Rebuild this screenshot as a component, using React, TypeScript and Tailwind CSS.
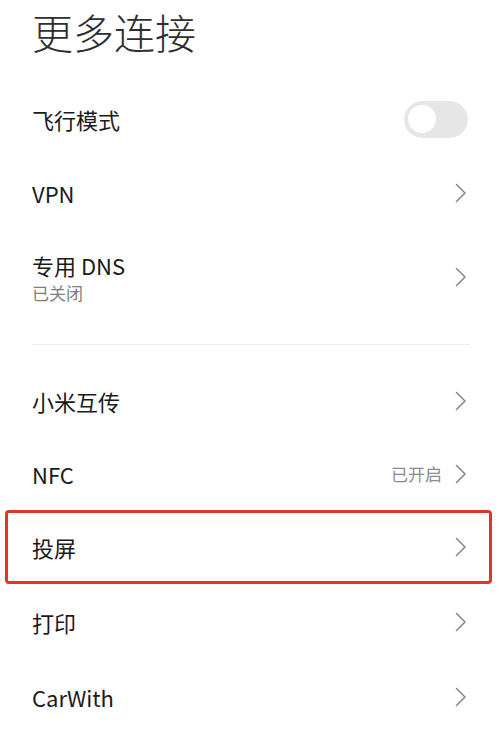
import type { ReactNode } from "react";

function Chevron() {
  return (
    <svg width="12" height="20" viewBox="0 0 12 20" aria-hidden="true" className="shrink-0">
      <polyline points="1.5,1.5 10,10 1.5,18.5" fill="none" stroke="#8a8a8a" strokeWidth="1.6" strokeLinecap="round" strokeLinejoin="round" />
    </svg>
  );
}

function Row({ title, sub, right, h }: { title: string; sub?: string; right?: ReactNode; h: string }) {
  return (
    <div className={`flex items-center justify-between pl-8 pr-[33px] ${h}`}>
      <div className="flex flex-col">
        <span className="text-[22px] leading-[32px] text-[#1a1a1a]">{title}</span>
        {sub ? <span className="text-[17px] leading-[24px] text-[#808080]">{sub}</span> : null}
      </div>
      {right ?? <Chevron />}
    </div>
  );
}

export default function App() {
  return (
    <div className="w-[500px] h-[741px] overflow-hidden bg-white" style={{ fontFamily: '"Noto Sans CJK SC", "Noto Sans", sans-serif' }}>
      <div className="h-[82px] pl-8 pt-[4px]">
        <h1 className="text-[41px] leading-[54px] font-light text-[#2e2e2e]">更多连接</h1>
      </div>

      <Row
        title="飞行模式"
        h="h-[74px]"
        right={
          <div className="w-[64px] h-[37px] rounded-full bg-[#e6e6e6] flex items-center pl-[4px] mr-[-1px]">
            <div className="w-[28px] h-[28px] rounded-full bg-white" />
          </div>
        }
      />
      <Row title="VPN" h="h-[74px]" />
      <Row title="专用 DNS" sub="已关闭" h="h-[94px]" />

      <div className="h-[40px] flex items-center pl-8 pr-[30px]">
        <div className="h-px w-full bg-[#ececec]" />
      </div>

      <Row title="小米互传" h="h-[74px]" />
      <Row
        title="NFC"
        h="h-[72px]"
        right={
          <div className="flex items-center gap-[13px]">
            <span className="text-[17px] text-[#8c8c8c]">已开启</span>
            <Chevron />
          </div>
        }
      />

      <div className="ml-[5px] mr-[8px] h-[74px] border-[3px] border-[#e0352b] rounded-[4px] flex items-center justify-between pl-6 pr-[22px]">
        <span className="text-[22px] leading-[32px] text-[#1a1a1a]">投屏</span>
        <Chevron />
      </div>

      <Row title="打印" h="h-[75px]" />
      <Row title="CarWith" h="h-[76px]" />
    </div>
  );
}
